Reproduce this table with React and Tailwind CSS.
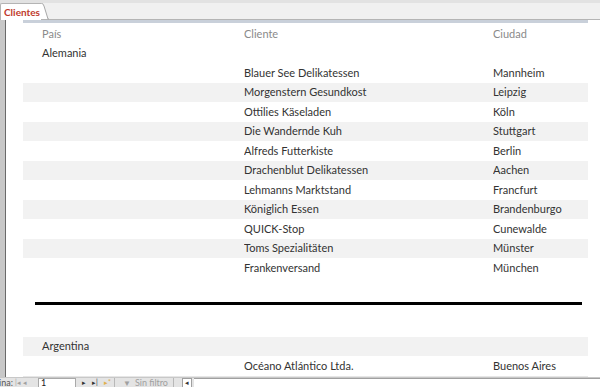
import React from 'react';

const font = { fontFamily: 'Lato, "Open Sans", sans-serif' };

const rows = [
  ['Blauer See Delikatessen', 'Mannheim'],
  ['Morgenstern Gesundkost', 'Leipzig'],
  ['Ottilies Käseladen', 'Köln'],
  ['Die Wandernde Kuh', 'Stuttgart'],
  ['Alfreds Futterkiste', 'Berlin'],
  ['Drachenblut Delikatessen', 'Aachen'],
  ['Lehmanns Marktstand', 'Francfurt'],
  ['Königlich Essen', 'Brandenburgo'],
  ['QUICK-Stop', 'Cunewalde'],
  ['Toms Spezialitäten', 'Münster'],
  ['Frankenversand', 'München'],
];

function Row({ pais, cliente, ciudad, gray, header }) {
  return (
    <div className={`flex h-[19.5px] items-center w-[565px] ${gray ? 'bg-[#f2f2f2]' : ''} ${header ? 'text-[#8a8a8a]' : 'text-[#333333]'}`}>
      <div className="w-[221px] pl-[19px] truncate">{pais}</div>
      <div className="w-[249px] truncate">{cliente}</div>
      <div className="flex-1 truncate">{ciudad}</div>
    </div>
  );
}

export default function App() {
  return (
    <div className="w-[600px] h-[387px] flex flex-col overflow-hidden bg-white text-[11px]" style={font}>
      <div className="h-[3px] bg-[#e2e2e2]" />
      <div className="h-[17px] bg-[#f0f0f0] border-b border-[#b4b4b4] flex items-end relative">
        <div className="h-[17px] w-[41px] bg-white border-t border-l border-[#b4b4b4] rounded-tl-[2px] flex items-center pl-[3px] text-[10px] font-bold text-[#c0392b] relative z-10 -mb-px">
          Clientes
        </div>
        <svg width="8" height="17" className="-mb-px relative z-10" viewBox="0 0 8 17">
          <path d="M0 0 Q2 0 3 3 L7 16 L0 16 Z" fill="#ffffff" />
          <path d="M0 0 Q2 0 3 3 L7 16 L8 16" fill="none" stroke="#a8a8a8" strokeWidth="1" />
        </svg>
      </div>
      <div className="flex flex-1 min-h-0">
        <div className="w-[6px] bg-[#c8c8c8] border-r border-[#6a6a6a]" />
        <div className="flex-1 pl-[17px] flex flex-col">
          <div className="h-[3px] w-[565px] bg-[#c9d0da]" />
          <div className="h-[1px]" />
          <Row header pais="País" cliente="Cliente" ciudad="Ciudad" />
          <Row pais="Alemania" />
          {rows.map(([c, ci], i) => (
            <Row key={c} cliente={c} ciudad={ci} gray={i % 2 === 1} />
          ))}
          <div className="h-[24px]" />
          <div className="h-[3px] w-[547px] ml-[12px] bg-black" />
          <div className="h-[32px]" />
          <Row pais="Argentina" gray />
          <Row cliente="Océano Atlántico Ltda." ciudad="Buenos Aires" />
          <div className="h-px w-[565px] bg-[#e6e6e6]" />
        </div>
      </div>
      <div className="h-[10px] bg-[#e4e4e4] border-t border-[#c8c8c8] flex items-center text-[9px] text-[#555] leading-none overflow-hidden">
        <span className="-ml-[1px] w-[16px]">ina:</span>
        <span className="text-[#a0a0a0] text-[7px] w-[8px]">|◂</span>
        <span className="text-[#a0a0a0] text-[7px] w-[15px]">◂</span>
        <div className="w-[38px] h-[10px] bg-white border border-[#a9a9a9] pl-[2px] text-[#222] flex items-center">1</div>
        <span className="text-[#333] text-[7px] ml-[6px] w-[10px]">▸</span>
        <span className="text-[#333] text-[7px] w-[12px]">▸|</span>
        <span className="text-[#e0b050] text-[7px] w-[8px]">▸*</span>
        <div className="ml-[2px] h-[10px] w-[60px] border-x border-[#b8b8b8] flex items-center gap-[4px] pl-[8px] text-[#a0a0a0]">
          <span className="text-[8px]">▼</span>
          <span>Sin filtro</span>
        </div>
        <div className="ml-[8px] w-[10px] h-[10px] bg-white border border-[#a0a0a0] flex items-center justify-center text-[7px] text-[#333]">◂</div>
        <div className="flex-1 h-[10px] bg-white border-t border-[#a0a0a0] ml-[2px]" />
      </div>
    </div>
  );
}
